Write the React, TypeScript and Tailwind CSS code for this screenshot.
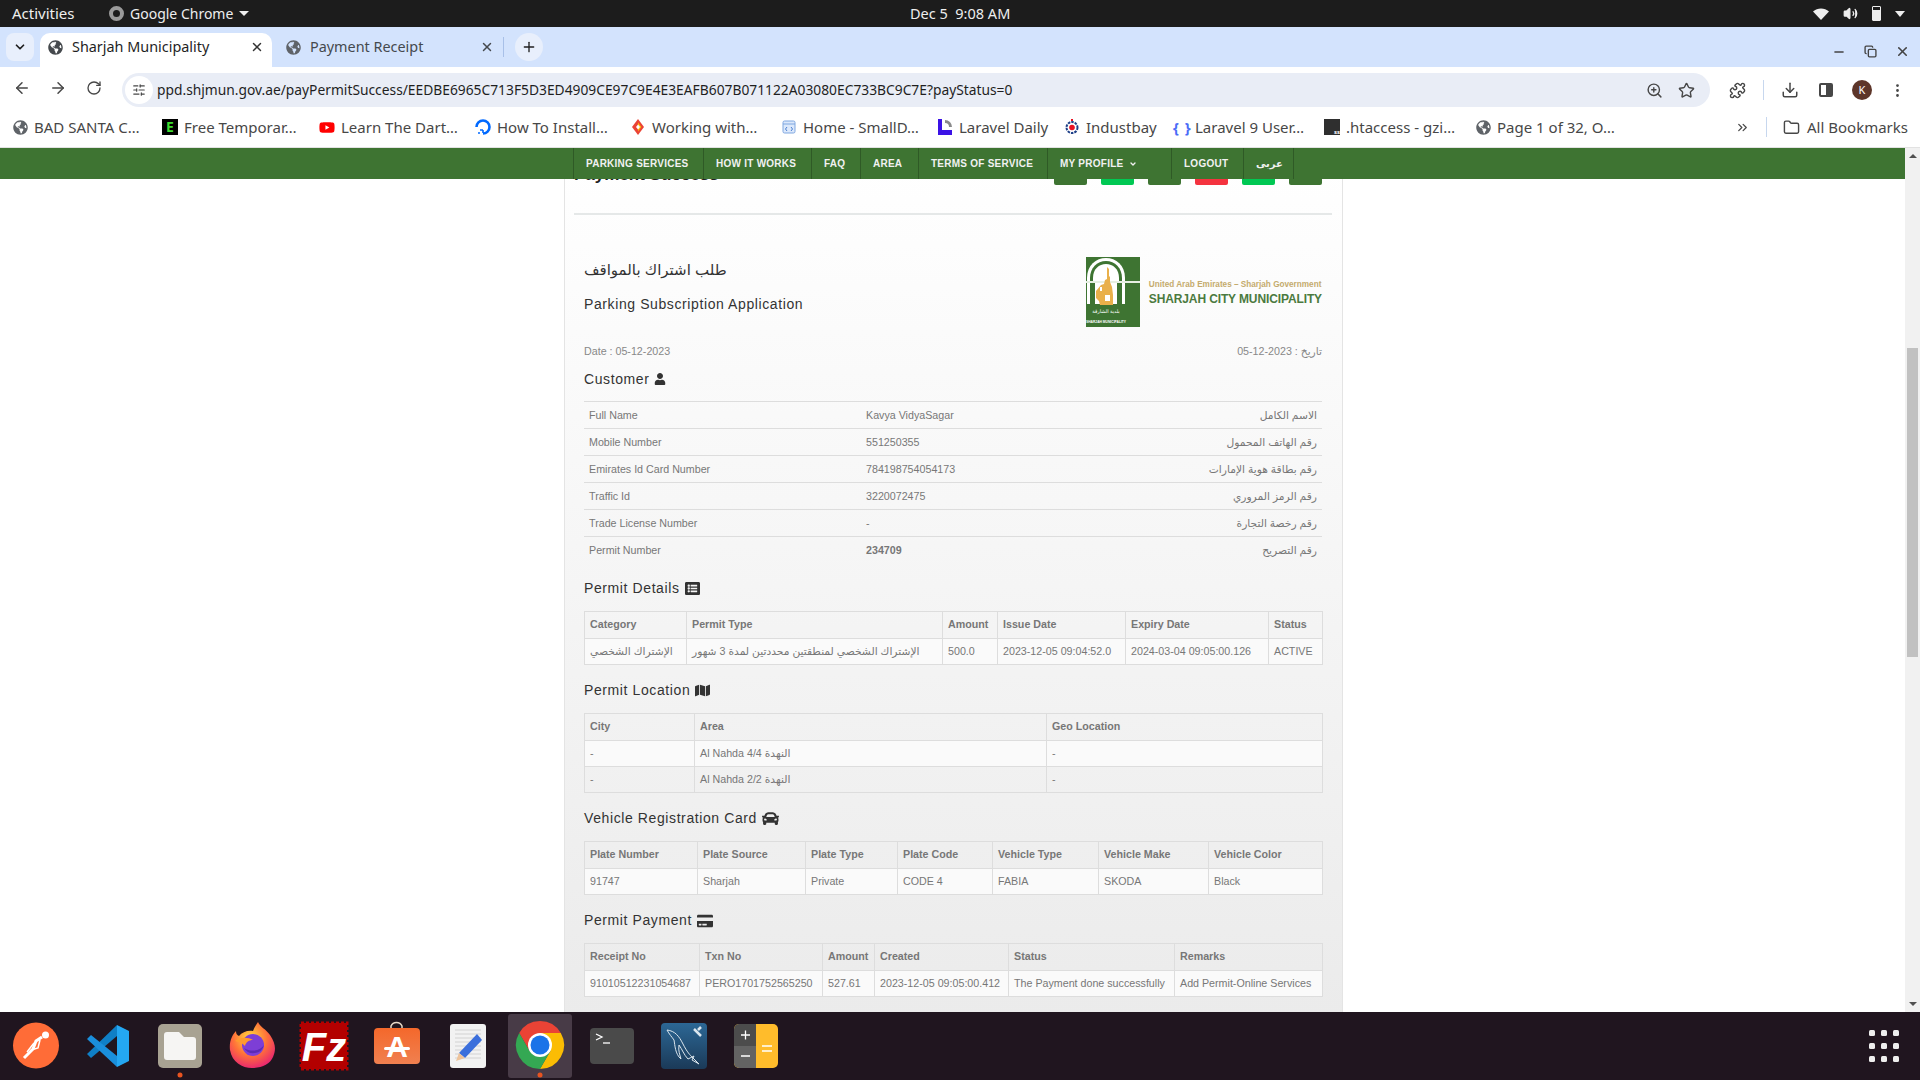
import {
  ArrowLeft,
  ArrowRight,
  ChevronDown,
  ChevronsRight,
  Download,
  EllipsisVertical,
  Folder,
  Plus,
  Puzzle,
  RotateCw,
  SlidersHorizontal,
  Star,
  Volume2,
  X,
  ZoomIn,
  Minus,
  Copy,
} from "lucide-react";
import { FaCar, FaCreditCard, FaGlobeAmericas, FaListAlt, FaMap, FaUser, FaYoutube } from "react-icons/fa";
import type { ReactNode } from "react";

const Globe = () => <FaGlobeAmericas className="text-[#5f6368]" size={15} />;

const bookmarks: { icon: ReactNode; label: string; w: string }[] = [
  { icon: <Globe />, label: "BAD SANTA C…", w: "w-[150px]" },
  {
    icon: (
      <span className="flex h-4 w-4 items-center justify-center bg-black text-[14px] font-bold leading-none text-[#3ddc2f]">E</span>
    ),
    label: "Free Temporar…",
    w: "w-[157px]",
  },
  { icon: <FaYoutube className="text-[#f00]" size={17} />, label: "Learn The Dart…", w: "w-[156px]" },
  {
    icon: (
      <svg width="16" height="16" viewBox="0 0 16 16" fill="none">
        <path d="M8 14.5A6.5 6.5 0 1 0 1.5 8" stroke="#0069ff" strokeWidth="2.6" />
        <path d="M8 11v3M5 11h3M3 14h2" stroke="#0069ff" strokeWidth="1.6" />
      </svg>
    ),
    label: "How To Install…",
    w: "w-[155px]",
  },
  {
    icon: (
      <svg width="16" height="16" viewBox="0 0 16 16">
        <path d="M8 0l6 8-6 8-6-8z" fill="#ea4335" />
        <path d="M8 3.5l3.4 4.5L8 12.500z" fill="#fbbc05" />
        <path d="M8 5.500L10 8l-2 2.500L6 8z" fill="#fff" />
      </svg>
    ),
    label: "Working with…",
    w: "w-[151px]",
  },
  {
    icon: (
      <svg width="16" height="16" viewBox="0 0 16 16">
        <rect x="2" y="2" width="12" height="12" rx="1.500" fill="#dbe8fb" stroke="#7fa7e0" />
        <path d="M2 5h12" stroke="#7fa7e0" />
        <path d="M6 8l-1.500 2L6 12M10 8l1.500 2L10 12" stroke="#4a7fd0" fill="none" />
      </svg>
    ),
    label: "Home - SmallD…",
    w: "w-[156px]",
  },
  {
    icon: (
      <svg width="16" height="16" viewBox="0 0 16 16" fill="none">
        <path d="M1 0h4v11h10v5H1z" fill="#3b12e6" />
        <path d="M8 1a7 7 0 0 1 7 7h-3a4 4 0 0 0-4-4z" fill="#8a8a8a" />
      </svg>
    ),
    label: "Laravel Daily",
    w: "w-[127px]",
  },
  {
    icon: (
      <svg width="16" height="16" viewBox="0 0 16 16" fill="none">
        <circle cx="8" cy="8.500" r="5.500" stroke="#1d3f87" strokeWidth="2" strokeDasharray="2.500 1" />
        <circle cx="8" cy="8.500" r="2.800" fill="#e81123" />
        <path d="M7 0h2v2H7z" fill="#e81123" />
      </svg>
    ),
    label: "Industbay",
    w: "w-[109px]",
  },
  {
    icon: <span className="w-4 text-center text-[15px] font-bold leading-none tracking-[1px] text-[#4a6cf7]">{"{ }"}</span>,
    label: "Laravel 9 User…",
    w: "w-[151px]",
  },
  {
    icon: (
      <span className="flex h-4 w-4 items-end justify-end bg-[#2f2f2f] text-[6px] font-bold leading-none text-white">ss</span>
    ),
    label: ".htaccess - gzi…",
    w: "w-[151px]",
  },
  { icon: <Globe />, label: "Page 1 of 32, O…", w: "w-[150px]" },
];

const navItems = [
  { label: "PARKING SERVICES", w: "w-[130px]" },
  { label: "HOW IT WORKS", w: "w-[108px]" },
  { label: "FAQ", w: "w-[49px]" },
  { label: "AREA", w: "w-[58px]" },
  { label: "TERMS OF SERVICE", w: "w-[129px]" },
  { label: "MY PROFILE", w: "w-[124px]", caret: true },
  { label: "LOGOUT", w: "w-[72px]" },
  { label: "عربى", w: "w-[51px]" },
];

const actionButtons = ["bg-[#3e7432]", "bg-[#00c853]", "bg-[#3e7432]", "bg-[#f4333f]", "bg-[#00c853]", "bg-[#3e7432]"];

const customerRows = [
  ["Full Name", "Kavya VidyaSagar", "الاسم الكامل"],
  ["Mobile Number", "551250355", "رقم الهاتف المحمول"],
  ["Emirates Id Card Number", "784198754054173", "رقم بطاقة هوية الإمارات"],
  ["Traffic Id", "3220072475", "رقم الرمز المروري"],
  ["Trade License Number", "-", "رقم رخصة التجارة"],
  ["Permit Number", "234709", "رقم التصريح"],
];

const Grid = ({ cols, head, rows }: { cols: string[]; head: string[]; rows: string[][] }) => (
  <table className="w-full table-fixed border-collapse border border-[#ddd] text-[10.700px] text-[#777]">
    <colgroup>
      {cols.map((c, i) => (
        <col key={i} className={c} />
      ))}
    </colgroup>
    <thead>
      <tr className="h-[27px]">
        {head.map((h) => (
          <th key={h} className="whitespace-nowrap border border-[#ddd] px-[5px] text-left font-bold">
            {h}
          </th>
        ))}
      </tr>
    </thead>
    <tbody>
      {rows.map((r, i) => (
        <tr key={i} className={i % 2 === 0 ? "h-[26px] bg-[#fafafa]" : "h-[26px]"}>
          {r.map((c, j) => (
            <td key={j} className="whitespace-nowrap border border-[#ddd] px-[5px]">
              {c}
            </td>
          ))}
        </tr>
      ))}
    </tbody>
  </table>
);

const Heading = ({ children, icon, top = "mt-4" }: { children: ReactNode; icon: ReactNode; top?: string }) => (
  <div className={`mb-3 flex h-5 items-center gap-[5px] text-[14px] tracking-[0.6px] text-[#333] ${top}`}>
    {children}
    {icon}
  </div>
);

const Logo = () => (
  <svg width="54" height="70" viewBox="0 0 54 70">
    <rect width="54" height="70" fill="#3e7432" />
    <path d="M1 25V21C1 8 10 1 20 1S39 8 39 21v4z" fill="#fff" />
    <path d="M4 25V21C4 11 11 4 20 4S36 11 36 21v4z" fill="#3e7432" />
    <path d="M7 25V21C7 12 13 7 20 7S33 12 33 21v4z" fill="#fff" />
    <rect x="0" y="24" width="54" height="2" fill="#e6efe2" />
    <rect x="1" y="26" width="38" height="21" fill="#fff" />
    <rect x="4" y="26" width="5" height="21" fill="#3e7432" />
    <rect x="31" y="26" width="5" height="21" fill="#3e7432" />
    <path d="M10 34l5-6 3-1 1-4 2-1V10l2 2v7l1 1v5l2 5 1 8v10H14l-1-4-3-3z" fill="#e9b04a" />
    <path d="M19 38h5v6h-5zM14 30h2v4h-2z" fill="#fff" />
    <text x="20" y="56" textAnchor="middle" fontSize="5" fill="#fff">بلدية الشارقة</text>
    <text x="20" y="66" textAnchor="middle" fontSize="3.300" fontWeight="700" fill="#fff">SHARJAH MUNICIPALITY</text>
  </svg>
);

const Dock = () => (
  <div className="flex h-[68px] shrink-0 items-center justify-between bg-[#20151f]">
    <svg width="792" height="68" viewBox="0 0 792 68">
      <defs>
        <radialGradient id="ff" cx="0.450" cy="0.350" r="0.750">
          <stop offset="0" stopColor="#ffde3d" />
          <stop offset="0.500" stopColor="#ff7139" />
          <stop offset="1" stopColor="#e3127e" />
        </radialGradient>
        <linearGradient id="sql" x1="0" y1="0" x2="0" y2="1">
          <stop offset="0" stopColor="#2c6795" />
          <stop offset="1" stopColor="#1b3a58" />
        </linearGradient>
        <linearGradient id="store" x1="0" y1="0" x2="0" y2="1">
          <stop offset="0" stopColor="#f4682b" />
          <stop offset="1" stopColor="#f08050" />
        </linearGradient>
      </defs>
      {/* postman */}
      <circle cx="36" cy="33.500" r="23" fill="#ff6c37" />
      <path d="M24 46l9-9 3-8 6-4" stroke="#fff" strokeWidth="3" fill="none" />
      <path d="M31 38l7-2 2-8M27 40l7-9" stroke="#fff" strokeWidth="1.500" fill="none" />
      <circle cx="45.500" cy="23" r="3.500" fill="#fff" />
      {/* vscode */}
      <g transform="translate(72 0)">
        <polygon points="45,13 45,24 19,46 15,42" fill="#0f7fc6" />
        <polygon points="19,23 15,27 45,55 45,44" fill="#1a8fdc" />
        <polygon points="45,13 57,19 57,49 45,55" fill="#24a7f2" />
      </g>
      {/* files */}
      <g transform="translate(144 0)">
        <rect x="14" y="12" width="44" height="44" rx="5" fill="#a8a292" />
        <path d="M20 23a3 3 0 0 1 3-3h12l5 5h9a3 3 0 0 1 3 3v17a3 3 0 0 1-3 3H23a3 3 0 0 1-3-3z" fill="#f6f5f3" />
        <circle cx="36" cy="63" r="2.500" fill="#e95420" />
      </g>
      {/* firefox */}
      <g transform="translate(216 0)">
        <path d="M42 10c2 5 8 7 12 13 6 9 6 15 3 22-3 7-11 11-21 11S16 50 14 38c-1-8 2-15 6-19 0 3 1 4 3 5 3-4 9-6 14-5 1-3 3-6 5-9z" fill="url(#ff)" />
        <circle cx="37" cy="33" r="11" fill="#7d3ed6" />
        <path d="M28 36a11 11 0 0 0 20-3c-3 5-12 8-20 3z" fill="#5b2bb5" />
        <path d="M19 29c5-4 13-4 18-1-4 0-7 2-8 6-3-3-6-4-10-5z" fill="#ff9a2e" />
      </g>
      {/* filezilla */}
      <g transform="translate(288 0)">
        <rect x="13" y="11" width="46" height="46" fill="#b30000" stroke="#b30000" strokeWidth="3" strokeDasharray="3 2" />
        <text x="36" y="49" textAnchor="middle" fontSize="40" fontWeight="700" fontStyle="italic" fill="#fff" fontFamily="Liberation Sans">Fz</text>
      </g>
      {/* store */}
      <g transform="translate(360 0)">
        <path d="M31 16v-2a6 6 0 0 1 11 0v2" stroke="#e8d9c8" strokeWidth="1.500" fill="none" />
        <rect x="14" y="16" width="46" height="36" rx="4" fill="url(#store)" />
        <text x="37" y="45" textAnchor="middle" fontSize="30" fontWeight="700" fill="#fff" fontFamily="Liberation Sans">A</text>
        <rect x="24" y="35" width="26" height="3" rx="1.500" fill="#fff" />
      </g>
      {/* text editor */}
      <g transform="translate(432 0)">
        <rect x="18" y="12" width="36" height="44" rx="3" fill="#f2f2f2" />
        <path d="M23 18h26M23 22h26M23 26h26M23 30h26M23 34h26M23 38h26M23 42h26M23 46h26" stroke="#d2d2d2" />
        <path d="M45 22l5 6-17 18-6-5z" fill="#3b6fdc" />
        <path d="M27 41l6 5-9 3z" fill="#eec39a" />
      </g>
      {/* chrome */}
      <g transform="translate(504 0)">
        <rect x="4" y="2" width="64" height="64" rx="3" fill="#483b47" />
        <path d="M15.200 21A24 24 0 0 1 56.800 21L36 21 25.600 39z" fill="#ea4335" />
        <path d="M56.800 21A24 24 0 0 1 36 57L46.400 39 36 21z" fill="#fbbc04" />
        <path d="M36 57A24 24 0 0 1 15.200 21L25.600 39 46.400 39z" fill="#34a853" />
        <circle cx="36" cy="33" r="12" fill="#fff" />
        <circle cx="36" cy="33" r="9.500" fill="#1a73e8" />
        <circle cx="36" cy="63" r="2.500" fill="#e95420" />
      </g>
      {/* terminal */}
      <g transform="translate(576 0)">
        <rect x="14" y="16" width="44" height="36" rx="4" fill="#4a4a4a" />
        <path d="M20 22l6 3-6 3" stroke="#fff" strokeWidth="1.300" fill="none" />
        <path d="M27 31h7" stroke="#fff" strokeWidth="1.300" />
      </g>
      {/* mysql */}
      <g transform="translate(648 0)">
        <rect x="13" y="11" width="46" height="46" rx="4" fill="url(#sql)" />
        <path d="M19 18c8 1 12 6 16 14s7 11 10 14l6 6-7-4 2-4-6 3c-4-4-6-10-9-14-1 6 1 10 2 14-6-5-6-14-7-19-2-3-5-6-7-10z" fill="none" stroke="#dbe6ee" strokeWidth="1" />
        <path d="M46 17l7 7M53 15l-3 3" stroke="#dbe6ee" strokeWidth="2.500" />
      </g>
      {/* calculator */}
      <g transform="translate(720 0)">
        <rect x="14" y="12" width="44" height="44" rx="5" fill="#ffbc2b" />
        <path d="M36 12H19a5 5 0 0 0-5 5v17h22z" fill="#4c4c4c" />
        <path d="M36 34H14v17a5 5 0 0 0 5 5h17z" fill="#636363" />
        <path d="M21 23h9M25.500 18.500v9M21 44h9M42 34h10M42 39h10" stroke="#fff" strokeWidth="1.300" />
      </g>
    </svg>
    <div className="mr-[21px] grid grid-cols-3 gap-x-[6px] gap-y-[7px]">
      {Array.from({ length: 9 }).map((_, i) => (
        <span key={i} className="h-[6px] w-[6px] rounded-[1.500px] bg-[#eeeeee]" />
      ))}
    </div>
  </div>
);

export default function App() {
  return (
    <div className="flex h-screen flex-col overflow-hidden bg-white font-['Liberation_Sans','DejaVu_Sans',sans-serif]">
      {/* gnome bar */}
      <div className="flex h-[27px] shrink-0 items-center justify-between bg-[#1c1c1c] pl-3 pr-[15px] font-['Noto_Sans','DejaVu_Sans',sans-serif] text-[14px] text-[#eee]">
        <div className="flex w-[258px] items-center">
          <span className="w-[97px] text-[15px]">Activities</span>
          <span className="mr-[6px] h-[15px] w-[15px] rounded-full border-[4px] border-[#9a9a9a]" />
          <span>Google Chrome</span>
          <span className="ml-[6px] h-0 w-0 border-x-[5px] border-t-[5px] border-x-transparent border-t-[#eee]" />
        </div>
        <span className="ml-[640px] text-[14.500px]">Dec 5&nbsp;&nbsp;9:08 AM</span>
        <div className="ml-auto flex items-center gap-[14px]">
          <svg width="16" height="14" viewBox="0 0 16 14">
            <path d="M8 13L0 4.500C4.500 .5 11.500 .5 16 4.500z" fill="#eee" />
          </svg>
          <Volume2 size={15} className="fill-[#eee] text-[#eee]" />
          <span className="h-[15px] w-[9px] rounded-[1px] border border-[#eee] bg-[linear-gradient(#1c1c1c_25%,#eee_25%)]" />
          <span className="h-0 w-0 border-x-[5px] border-t-[6px] border-x-transparent border-t-[#eee]" />
        </div>
      </div>

      {/* tab strip */}
      <div className="flex h-10 shrink-0 items-end bg-[#d3e3fd] font-['Noto_Sans','DejaVu_Sans',sans-serif] text-[14.400px]">
        <div className="mb-[6px] ml-[6px] flex h-7 w-7 items-center justify-center rounded-lg bg-[#e8effc]">
          <ChevronDown size={14} strokeWidth={3} className="text-[#1f1f1f]" />
        </div>
        <div className="ml-[6px] flex h-[34px] w-[232px] items-center rounded-t-[10px] bg-white px-2 pb-[6px] text-[#1f1f1f]">
          <FaGlobeAmericas size={15} className="text-[#45494d]" />
          <span className="ml-[9px]">Sharjah Municipality</span>
          <X size={14} strokeWidth={2.500} className="ml-auto text-[#333]" />
        </div>
        <div className="flex h-[34px] w-[240px] items-center pb-[6px] pl-[14px] pr-2 text-[#45494d]">
          <FaGlobeAmericas size={15} className="text-[#5f6368]" />
          <span className="ml-[9px]">Payment Receipt</span>
          <X size={14} strokeWidth={2.500} className="ml-auto mr-[4px] text-[#45494d]" />
          <span className="ml-[5px] h-[20px] w-px bg-[#a8c0e8]" />
        </div>
        <div className="mb-[6px] ml-[3px] flex h-7 w-7 items-center justify-center rounded-full bg-[#e8effc]">
          <Plus size={16} className="text-[#1f1f1f]" />
        </div>
        <div className="mb-[8px] ml-auto flex items-center gap-[18px] pr-[10px] text-[#444]">
          <Minus size={14} strokeWidth={2.500} />
          <Copy size={13} strokeWidth={2.500} />
          <X size={15} strokeWidth={2.500} />
        </div>
      </div>

      {/* toolbar */}
      <div className="flex h-10 shrink-0 items-end bg-white text-[#474747]">
        <div className="flex h-[34px] w-[122px] items-center pb-1 pl-[13px]">
          <ArrowLeft size={18} />
          <ArrowRight size={18} className="ml-[18px]" />
          <RotateCw size={16} className="ml-[19px]" />
        </div>
        <div className="flex h-[34px] w-[1588px] items-center rounded-full bg-[#e9edf6] pl-[3px] pr-[15px]">
          <span className="flex h-[28px] w-[28px] items-center justify-center rounded-full bg-white">
            <SlidersHorizontal size={14} />
          </span>
          <span className="ml-[4px] font-['Noto_Sans',sans-serif] text-[13.800px] text-[#1f1f1f]">
            ppd.shjmun.gov.ae/payPermitSuccess/EEDBE6965C713F5D3ED4909CE97C9E4E3EAFB607B071122A03080EC733BC9C7E?payStatus=0
          </span>
          <ZoomIn size={17} className="ml-auto" />
          <Star size={17} className="ml-[15px]" />
        </div>
        <div className="flex h-[34px] flex-1 items-center pl-[19px]">
          <Puzzle size={17} />
          <span className="ml-[17px] h-5 w-px bg-[#c7d7ee]" />
          <Download size={18} className="ml-[17px]" />
          <span className="ml-[20px] h-[14px] w-[14px] rounded-[2px] border-2 border-[#474747] bg-[linear-gradient(90deg,#fff_50%,#474747_50%)]" />
          <span className="ml-[19px] flex h-5 w-5 items-center justify-center rounded-full bg-[#5d3529] font-['Noto_Sans',sans-serif] text-[11px] text-white">K</span>
          <EllipsisVertical size={17} className="ml-[17px]" />
        </div>
      </div>

      {/* bookmarks */}
      <div className="flex h-[41px] shrink-0 items-center border-b border-[#e2e2e2] bg-white pl-3 font-['Noto_Sans','DejaVu_Sans',sans-serif] text-[15px] text-[#474747]">
        {bookmarks.map((b) => (
          <div key={b.label} className={`flex shrink-0 items-center gap-[6px] whitespace-nowrap ${b.w}`}>
            <span className="flex w-4 shrink-0 justify-center">{b.icon}</span>
            {b.label}
          </div>
        ))}
        <ChevronsRight size={15} className="ml-[110px]" />
        <span className="ml-[16px] h-5 w-px bg-[#c7d7ee]" />
        <Folder size={17} className="ml-[16px]" />
        <span className="ml-[7px] whitespace-nowrap">All Bookmarks</span>
      </div>

      {/* page */}
      <div className="flex min-h-0 flex-1">
        <div className="min-w-0 flex-1 overflow-hidden">
          <div className="relative z-10 flex h-[31px] bg-[#3e7432] pl-[573px] text-[10px] font-bold tracking-[0.25px] text-[#f1f1f1]">
            {navItems.map((n) => (
              <div key={n.label} className={`flex items-center justify-start border-l border-[#2f5a26] pl-[12px] last:border-r ${n.w}`}>
                {n.label}
                {n.caret && <ChevronDown size={8} strokeWidth={4} className="ml-[6px]" />}
              </div>
            ))}
          </div>
          <div className="ml-[564px] -mt-5 w-[779px] border-x border-[#e4e4e4] bg-linear-to-b from-white to-[#ebebeb] pb-5 pl-[9px] pr-[10px]">
            <div className="flex h-[26px] items-end justify-between">
              <h2 className="text-[17px] font-bold leading-[20px] text-[#222]">Payment Success</h2>
              <div className="flex gap-[14px] pr-[10px]">
                {actionButtons.map((c, i) => (
                  <span key={i} className={`h-[26px] w-[33px] rounded-b-[2px] ${c}`} />
                ))}
              </div>
            </div>
            <div className="mt-7 h-0.5 bg-[#e5e8e8]" />
            <div className="mx-[10px] mt-[42px]">
              <div className="flex h-[70px] justify-between">
                <div className="flex flex-col gap-[14px] pt-[3px] text-[#333]">
                  <div className="h-5 text-[15px] leading-5 tracking-[0.3px]">طلب اشتراك بالمواقف</div>
                  <div className="h-5 text-[14px] leading-5 tracking-[0.6px]">Parking Subscription Application</div>
                </div>
                <div className="flex items-start gap-[9px]">
                  <Logo />
                  <div className="mt-[22px] flex flex-col">
                    <span className="whitespace-nowrap text-[8.200px] font-bold leading-[12px] text-[#c4ab6c]">United Arab Emirates – Sharjah Government</span>
                    <span className="mt-px whitespace-nowrap text-[12px] font-bold leading-[14px] tracking-[-0.12px] text-[#4b7a3f]">SHARJAH CITY MUNICIPALITY</span>
                  </div>
                </div>
              </div>
              <div className="mt-[17px] flex h-[14px] items-center justify-between text-[10.700px] text-[#888]">
                <span>Date : 05-12-2023</span>
                <span>05-12-2023 : تاريخ</span>
              </div>
              <Heading icon={<FaUser size={12} />} top="mt-[11px]">
                Customer
              </Heading>
              <table className="w-full table-fixed border-collapse text-[10.700px] text-[#777]">
                <colgroup>
                  <col className="w-[277px]" />
                  <col className="w-[231px]" />
                  <col />
                </colgroup>
                <tbody>
                  {customerRows.map((r) => (
                    <tr key={r[0]} className="h-[27px] border-t border-[#ddd] last:h-[26px]">
                      <td className="px-[5px]">{r[0]}</td>
                      <td className={r[0] === "Permit Number" ? "px-[5px] font-bold" : "px-[5px]"}>{r[1]}</td>
                      <td className="px-[5px] text-right">{r[2]}</td>
                    </tr>
                  ))}
                </tbody>
              </table>
              <Heading icon={<FaListAlt size={15} />}>Permit Details</Heading>
              <Grid
                cols={["w-[102px]", "w-[256px]", "w-[55px]", "w-[128px]", "w-[143px]", "w-[54px]"]}
                head={["Category", "Permit Type", "Amount", "Issue Date", "Expiry Date", "Status"]}
                rows={[
                  [
                    "الإشتراك الشخصي",
                    "الإشتراك الشخصي لمنطقتين محددتين لمدة 3 شهور",
                    "500.0",
                    "2023-12-05 09:04:52.0",
                    "2024-03-04 09:05:00.126",
                    "ACTIVE",
                  ],
                ]}
              />
              <Heading icon={<FaMap size={15} />}>Permit Location</Heading>
              <Grid
                cols={["w-[110px]", "w-[352px]", "w-[276px]"]}
                head={["City", "Area", "Geo Location"]}
                rows={[
                  ["-", "Al Nahda 4/4 النهدة", "-"],
                  ["-", "Al Nahda 2/2 النهدة", "-"],
                ]}
              />
              <Heading icon={<FaCar size={17} />}>Vehicle Registration Card</Heading>
              <Grid
                cols={["w-[113px]", "w-[108px]", "w-[92px]", "w-[95px]", "w-[106px]", "w-[110px]", "w-[114px]"]}
                head={["Plate Number", "Plate Source", "Plate Type", "Plate Code", "Vehicle Type", "Vehicle Make", "Vehicle Color"]}
                rows={[["91747", "Sharjah", "Private", "CODE 4", "FABIA", "SKODA", "Black"]]}
              />
              <Heading icon={<FaCreditCard size={16} />}>Permit Payment</Heading>
              <Grid
                cols={["w-[115px]", "w-[123px]", "w-[52px]", "w-[134px]", "w-[166px]", "w-[148px]"]}
                head={["Receipt No", "Txn No", "Amount", "Created", "Status", "Remarks"]}
                rows={[
                  [
                    "91010512231054687",
                    "PERO1701752565250",
                    "527.61",
                    "2023-12-05 09:05:00.412",
                    "The Payment done successfully",
                    "Add Permit-Online Services",
                  ],
                ]}
              />
            </div>
          </div>
        </div>
        {/* scrollbar */}
        <div className="flex w-[15px] shrink-0 flex-col items-center bg-[#f1f1f1] pt-[6px]">
          <span className="h-0 w-0 border-x-[4px] border-b-[4px] border-x-transparent border-b-[#505050]" />
          <span className="mt-[190px] h-[309px] w-[11px] bg-[#c1c1c1]" />
          <span className="mt-auto mb-[6px] h-0 w-0 border-x-[4px] border-t-[4px] border-x-transparent border-t-[#505050]" />
        </div>
      </div>
      <Dock />
    </div>
  );
}
